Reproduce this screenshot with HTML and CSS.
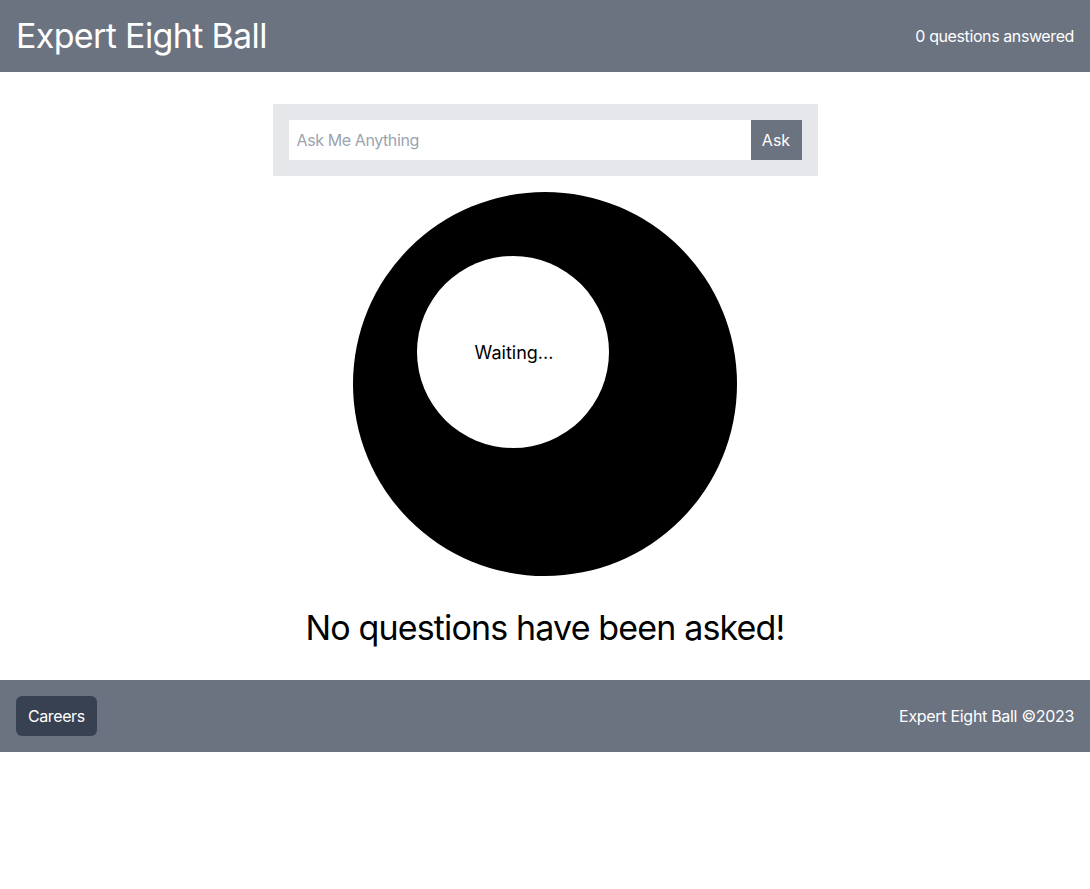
FILE: index.html
```html
<!DOCTYPE html>
<html>
<head>
<meta charset="utf-8">
<link rel="stylesheet" href="styles.css">
</head>
<body>
<header class="topbar">
  <h1 class="brand">Expert Eight Ball</h1>
  <span class="count">0 questions answered</span>
</header>
<main class="main">
  <form class="ask-form">
    <input class="ask-input" type="text" placeholder="Ask Me Anything">
    <button class="ask-btn" type="button">Ask</button>
  </form>
  <div class="ball">
    <div class="window">Waiting...</div>
  </div>
  <p class="status">No questions have been asked!</p>
</main>
<footer class="footer">
  <button class="careers" type="button">Careers</button>
  <span class="copy">Expert Eight Ball ©2023</span>
</footer>
</body>
</html>
```

FILE: styles.css
```css
* { box-sizing: border-box; }
html, body { margin: 0; padding: 0; background: #fff; }
body { font-family: Inter, "Noto Sans", sans-serif; color: #000; }

.topbar {
  height: 72px;
  background: #6b7280;
  color: #fff;
  display: flex;
  align-items: center;
  justify-content: space-between;
  padding: 0 16px;
}
.brand {
  margin: 0;
  font-size: 34px;
  line-height: 40px;
  font-weight: 400;
  letter-spacing: -0.65px;
}
.count { font-size: 16px; line-height: 24px; letter-spacing: -0.4px; }

.main {
  display: flex;
  flex-direction: column;
  align-items: center;
  padding: 32px 0 32px;
}
.ask-form {
  width: 545px;
  background: #e5e7eb;
  padding: 16px;
  display: flex;
  margin: 0 0 16px;
}
.ask-input {
  flex: 1;
  height: 40px;
  border: none;
  outline: none;
  padding: 0 8px;
  font-family: inherit;
  font-size: 16px;
  letter-spacing: -0.4px;
  background: #fff;
}
.ask-input::placeholder { color: #9ca3af; }
.ask-btn {
  width: 51px;
  height: 40px;
  border: none;
  background: #6b7280;
  color: #fff;
  font-family: inherit;
  font-size: 16px;
  padding: 0;
}
.ball {
  width: 384px;
  height: 384px;
  border-radius: 50%;
  background: #000;
  padding: 64px;
}
.window {
  width: 192px;
  height: 192px;
  border-radius: 50%;
  background: #fff;
  display: flex;
  align-items: center;
  justify-content: center;
  font-size: 18px;
  padding-left: 2px;
}
.status {
  margin: 32px 0 0;
  font-size: 34px;
  line-height: 40px;
  letter-spacing: -0.85px;
}

.footer {
  height: 72px;
  background: #6b7280;
  color: #fff;
  display: flex;
  align-items: center;
  justify-content: space-between;
  padding: 0 16px;
}
.careers {
  height: 40px;
  padding: 0 12px;
  border: none;
  border-radius: 6px;
  background: #374151;
  color: #fff;
  font-family: inherit;
  font-size: 16px;
  letter-spacing: -0.4px;
}
.copy { font-size: 16px; letter-spacing: -0.3px; }
```
